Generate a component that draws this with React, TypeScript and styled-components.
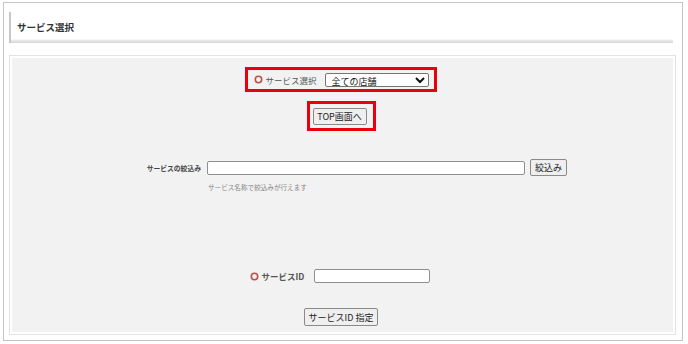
import styled, { createGlobalStyle } from 'styled-components';

const GlobalStyle = createGlobalStyle`
  html, body {
    margin: 0;
    padding: 0;
    background: #ffffff;
  }
  body {
    font-family: "Noto Sans CJK JP", "Noto Sans", sans-serif;
    color: #444;
  }
`;

function Radio() {
  return (
    <svg width="9" height="9" viewBox="0 0 9 9">
      <circle cx="4.5" cy="4.5" r="3.2" fill="none" stroke="#c0504d" strokeWidth="1.6" />
    </svg>
  );
}

function App() {
  return (
    <>
      <GlobalStyle />
      <Frame>
        <Header>
          <Title>サービス選択</Title>
        </Header>
        <Panel>
          <Inner>
            <Highlight $pad="0 5px 0 6px" $height={25}>
              <Radio />
              <Label>サービス選択</Label>
              <Select defaultValue="all">
                <option value="all">全ての店舗</option>
              </Select>
            </Highlight>
            <Highlight $pad="0 6px 0 3px" $height={30} $top={9}>
              <Button $width={54}>TOP画面へ</Button>
            </Highlight>
            <FilterRow>
              <FilterLabel>サービスの絞込み</FilterLabel>
              <TextInput $width={318} />
              <Button $width={37} $height={17}>
                絞込み
              </Button>
            </FilterRow>
            <Hint>サービス名称で絞込みが行えます</Hint>
            <IdRow>
              <Radio />
              <IdLabel>サービスID</IdLabel>
              <TextInput $width={116} />
            </IdRow>
            <Button $width={74} $height={18} $top={25}>
              サービスID 指定
            </Button>
          </Inner>
        </Panel>
      </Frame>
    </>
  );
}

export default App;

const Frame = styled.div`
  margin: 2px 0 0 3px;
  width: 680px;
  height: 339px;
  box-sizing: border-box;
  border: 1px solid #c4c4c4;
  padding: 9px 6px 0 5px;
  display: flex;
  flex-direction: column;
`;

const Header = styled.div`
  height: 31px;
  margin-right: 3px;
  border-left: 2px solid #c8c8c8;
  background: linear-gradient(
    to bottom,
    #ffffff calc(100% - 4px),
    #ececec calc(100% - 3px),
    #d6d6d6 100%
  );
  display: flex;
  align-items: center;
  padding: 0 0 2px 6px;
  box-sizing: border-box;
`;

const Title = styled.span`
  font-size: 9.5px;
  font-weight: 700;
  color: #333;
`;

const Panel = styled.div`
  margin-top: 12px;
  border: 1px solid #e2e2e2;
  padding: 2px;
  background: #ffffff;
`;

const Inner = styled.div`
  background: #f2f2f2;
  height: 274px;
  display: flex;
  flex-direction: column;
  align-items: center;
  padding: 9px 3px 0 0;
  box-sizing: border-box;
`;

const Highlight = styled.div<{ $pad: string; $height: number; $top?: number }>`
  box-sizing: border-box;
  height: ${(p) => p.$height}px;
  margin-top: ${(p) => p.$top ?? 0}px;
  border: 3px solid #e8000b;
  padding: ${(p) => p.$pad};
  display: flex;
  align-items: center;
`;

const Label = styled.span`
  font-size: 8.5px;
  color: #555;
  margin: 0 8px 0 2px;
`;

const Select = styled.select`
  width: 104px;
  height: 14px;
  font-family: inherit;
  font-size: 9px;
  color: #111;
  border: 1px solid #767676;
  border-radius: 2px;
  background: #ffffff;
  padding: 0 0 0 2px;
  box-sizing: border-box;
`;

const Button = styled.button<{ $width: number; $height?: number; $top?: number }>`
  width: ${(p) => p.$width}px;
  height: ${(p) => p.$height ?? 17}px;
  margin-top: ${(p) => p.$top ?? 0}px;
  padding: 0;
  font-family: inherit;
  font-size: 9px;
  color: #222;
  background: #efefef;
  border: 1px solid #8a8a8a;
  border-radius: 2px;
  box-sizing: border-box;
  flex-shrink: 0;
`;

const FilterRow = styled.div`
  align-self: stretch;
  margin-top: 28px;
  display: grid;
  grid-template-columns: 190px 318px 37px;
  justify-content: start;
  column-gap: 5px;
  align-items: center;
  height: 17px;
`;

const FilterLabel = styled.span`
  text-align: right;
  font-size: 6.8px;
  font-weight: 700;
  color: #444;
  padding-right: 1px;
`;

const TextInput = styled.input<{ $width: number }>`
  width: ${(p) => p.$width}px;
  height: 14px;
  box-sizing: border-box;
  border: 1px solid #8f8f8f;
  border-radius: 2px;
  background: #ffffff;
  padding: 0 2px;
`;

const Hint = styled.div`
  align-self: stretch;
  margin-top: 6px;
  padding-left: 196px;
  font-size: 6.6px;
  line-height: 10px;
  color: #888;
`;

const IdRow = styled.div`
  margin-top: 77px;
  height: 14px;
  display: flex;
  align-items: center;
  padding-right: 2px;
`;

const IdLabel = styled.span`
  font-size: 8.5px;
  font-weight: 700;
  color: #555;
  margin: 0 10px 0 3px;
`;
